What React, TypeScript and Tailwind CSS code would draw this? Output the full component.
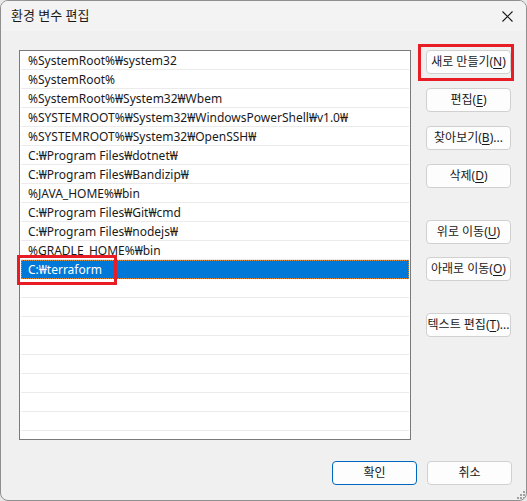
import React from "react";

const rows = [
  "%SystemRoot%₩system32",
  "%SystemRoot%",
  "%SystemRoot%₩System32₩Wbem",
  "%SYSTEMROOT%₩System32₩WindowsPowerShell₩v1.0₩",
  "%SYSTEMROOT%₩System32₩OpenSSH₩",
  "C:₩Program Files₩dotnet₩",
  "C:₩Program Files₩Bandizip₩",
  "%JAVA_HOME%₩bin",
  "C:₩Program Files₩Git₩cmd",
  "C:₩Program Files₩nodejs₩",
  "%GRADLE_HOME%₩bin",
  "C:₩terraform",
];

const font = {
  fontFamily: '"Noto Sans", "Noto Sans CJK KR", sans-serif',
};

function Btn({
  label,
  mnemonic,
  suffix,
  className,
  primary,
}: {
  label: string;
  mnemonic: string;
  suffix?: string;
  className?: string;
  primary?: boolean;
}) {
  return (
    <div
      className={
        "flex h-[24px] w-[85px] items-center justify-center rounded-[4px] bg-[#fdfdfd] text-[12px] leading-none text-[#1a1a1a] " +
        (primary
          ? "border-[1.5px] border-[#0067c0] "
          : "border border-[#d0d0d0] ") +
        (className ?? "")
      }
    >
      <span>
        {label}
        {mnemonic && (
          <>
            (<u className="underline-offset-2">{mnemonic}</u>)
          </>
        )}
        {suffix}
      </span>
    </div>
  );
}

export default function App() {
  const total = 21;
  return (
    <div className="h-[501px] w-[527px] bg-[#e8e8e8]" style={font}>
      <div className="relative flex h-[501px] w-[527px] flex-col overflow-hidden rounded-[8px] border border-[#8f8f8f] bg-[#f0f0f0]">
        {/* Title bar */}
        <div className="flex h-[30px] shrink-0 items-center justify-between bg-[#f3f3f3] pl-[10px] pr-[13px]">
          <span className="text-[13px] text-[#1a1a1a]">환경 변수 편집</span>
          <svg width="11" height="11" viewBox="0 0 11 11">
            <path d="M0.5 0.5 L10.5 10.5 M10.5 0.5 L0.5 10.5" stroke="#1a1a1a" strokeWidth="1.1" />
          </svg>
        </div>

        {/* Body */}
        <div className="flex pl-[18px] pt-[19px]">
          <div className="h-[390px] w-[392px] overflow-hidden border border-[#7a7a7a] bg-white">
            {Array.from({ length: total }).map((_, i) => {
              const text = rows[i];
              const selected = i === 11;
              if (selected) {
                return (
                  <div
                    key={i}
                    className="mx-[1px] flex h-[19px] items-center border border-dotted border-[#e08a3c] bg-[#0078d7] pl-[6px] pt-[1px] text-[12px] text-white"
                  >
                    {text}
                  </div>
                );
              }
              return (
                <div
                  key={i}
                  className="mx-[1px] flex h-[19px] items-center border-b border-[#ebebeb] pl-[7px] pt-[1px] text-[12px] text-[#1a1a1a]"
                >
                  {text ?? ""}
                </div>
              );
            })}
          </div>

          <div className="ml-[15px] flex flex-col">
            <Btn label="새로 만들기" mnemonic="N" />
            <Btn label="편집" mnemonic="E" className="mt-[14px]" />
            <Btn label="찾아보기" mnemonic="B" suffix="..." className="mt-[14px]" />
            <Btn label="삭제" mnemonic="D" className="mt-[14px]" />
            <Btn label="위로 이동" mnemonic="U" className="mt-[32px]" />
            <Btn label="아래로 이동" mnemonic="O" className="mt-[13px]" />
            <Btn label="텍스트 편집" mnemonic="T" suffix="..." className="mt-[32px]" />
          </div>
        </div>

        {/* Bottom buttons */}
        <div className="mt-[21px] flex justify-end gap-[10px] pr-[14px]">
          <Btn label="확인" mnemonic="" primary className="h-[23px]" />
          <Btn label="취소" mnemonic="" className="h-[23px]" />
        </div>

        {/* Resize grip */}
        <svg className="absolute bottom-[1px] right-[1px]" width="9" height="9" viewBox="0 0 9 9">
          {[
            [7, 1],
            [4, 4],
            [7, 4],
            [1, 7],
            [4, 7],
            [7, 7],
          ].map(([x, y], k) => (
            <rect key={k} x={x} y={y} width="2" height="2" fill="#a0a0a0" />
          ))}
        </svg>

        {/* Red annotation boxes */}
        <div className="pointer-events-none absolute left-[16px] top-[254px] h-[30px] w-[100px] border-[3px] border-[#e81c24]" />
        <div className="pointer-events-none absolute left-[417px] top-[43px] h-[37px] w-[96px] border-[3px] border-[#e81c24]" />
      </div>
    </div>
  );
}
